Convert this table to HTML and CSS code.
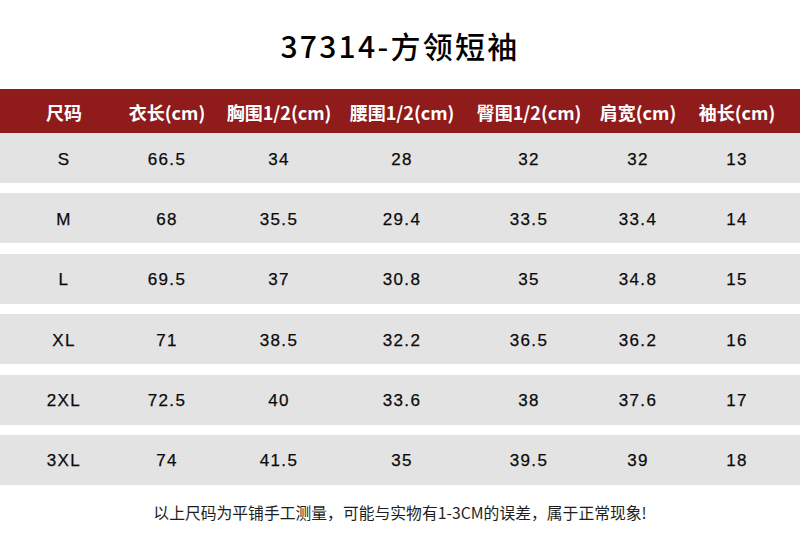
FILE: index.html
```html
<!DOCTYPE html>
<html lang="zh-CN">
<head>
<meta charset="utf-8">
<title>37314-方领短袖</title>
<link rel="stylesheet" href="styles.css">
</head>
<body>
<div class="page">
  <div class="title"><h1>37314-方领短袖</h1></div>
  <div class="table">
    <div class="grid head">
      <div>尺码</div><div>衣长(cm)</div><div>胸围1/2(cm)</div><div>腰围1/2(cm)</div><div>臀围1/2(cm)</div><div>肩宽(cm)</div><div>袖长(cm)</div>
    </div>
    <div class="grid row first">
      <div>S</div><div>66.5</div><div>34</div><div>28</div><div>32</div><div>32</div><div>13</div>
    </div>
    <div class="grid row">
      <div>M</div><div>68</div><div>35.5</div><div>29.4</div><div>33.5</div><div>33.4</div><div>14</div>
    </div>
    <div class="grid row">
      <div>L</div><div>69.5</div><div>37</div><div>30.8</div><div>35</div><div>34.8</div><div>15</div>
    </div>
    <div class="grid row">
      <div>XL</div><div>71</div><div>38.5</div><div>32.2</div><div>36.5</div><div>36.2</div><div>16</div>
    </div>
    <div class="grid row">
      <div>2XL</div><div>72.5</div><div>40</div><div>33.6</div><div>38</div><div>37.6</div><div>17</div>
    </div>
    <div class="grid row">
      <div>3XL</div><div>74</div><div>41.5</div><div>35</div><div>39.5</div><div>39</div><div>18</div>
    </div>
  </div>
  <p class="note">以上尺码为平铺手工测量，可能与实物有1-3CM的误差，属于正常现象!</p>
</div>
</body>
</html>
```
FILE: styles.css
```css
html, body {
  margin: 0;
  padding: 0;
  background: #ffffff;
}
.page {
  width: 800px;
  height: 540px;
  overflow: hidden;
  font-family: "Noto Sans CJK SC", "Liberation Sans", sans-serif;
}
.title {
  height: 89px;
  display: flex;
  align-items: center;
  justify-content: center;
}
.title h1 {
  margin: 0;
  font-size: 30px;
  font-weight: 500;
  line-height: 1;
  letter-spacing: 2.3px;
  color: #000;
}
.grid {
  display: grid;
  grid-template-columns: 100px 106px 118px 128px 126px 92px 106px;
  padding-left: 14px;
  align-items: center;
  text-align: center;
  white-space: nowrap;
}
.head {
  height: 44px;
  background: #8f1b1b;
  color: #ffffff;
  font-weight: 700;
  font-size: 18px;
  padding-top: 1px;
  box-sizing: border-box;
}
.row {
  height: 50px;
  margin-top: 10.4px;
  padding-top: 3px;
  box-sizing: border-box;
  background: #e3e3e3;
  color: #0a0a0a;
  font-family: "Liberation Sans", "Noto Sans CJK SC", sans-serif;
  font-size: 17px;
  letter-spacing: 1.4px;
  -webkit-text-stroke: 0.25px #0a0a0a;
}
.row.first {
  margin-top: 0;
}
.note {
  margin: 0;
  height: 55px;
  display: flex;
  align-items: center;
  justify-content: center;
  font-size: 15.8px;
  color: #1e1e1e;
}
```
